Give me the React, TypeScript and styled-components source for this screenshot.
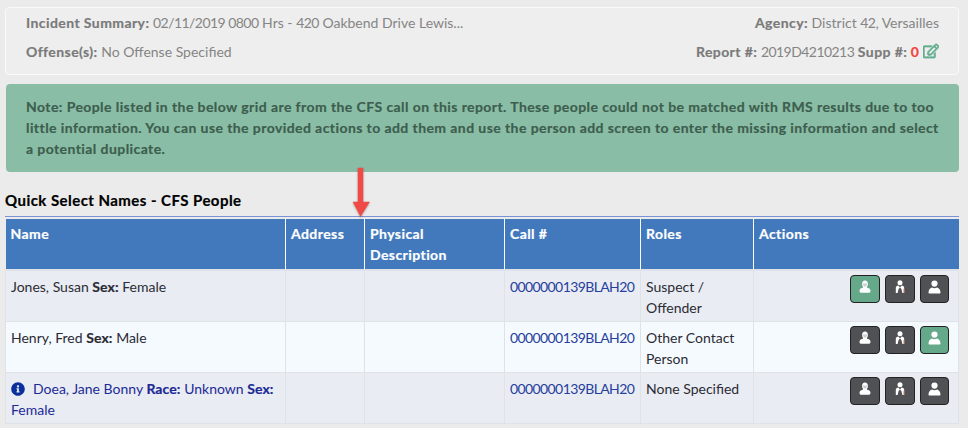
import React from 'react';
import styled, { createGlobalStyle } from 'styled-components';
import { FaInfoCircle, FaRegEdit } from 'react-icons/fa';

const GlobalStyle = createGlobalStyle`
  html, body {
    margin: 0;
    height: 100%;
    overflow: hidden;
    background: #ebebeb;
  }
  body {
    font-family: Lato, "Noto Sans", sans-serif;
    font-size: 14px;
    line-height: 21px;
    color: #333;
  }
  b {
    font-weight: 700;
    letter-spacing: 0.42px;
    -webkit-text-stroke: 0.2px currentColor;
  }
`;

const PEOPLE = [
  { name: 'Jones, Susan', sex: 'Female', roles: 'Suspect / Offender', active: 0 },
  { name: 'Henry, Fred', sex: 'Male', roles: 'Other Contact Person', active: 2 },
  { name: 'Doea, Jane Bonny', race: 'Unknown', sex: 'Female', roles: 'None Specified', active: -1, flagged: true },
];

const MaskIcon = () => (
  <svg width="12" height="14" viewBox="0 0 12 14">
    <path d="M6 .5c1.900 0 2.900 1.500 2.900 3.500 0 1.300-.3 2.300-.9 3v.8c1.500.3 3.500 1 3.500 2.900 0 1.200-.6 2.100-2 2.100H2.500c-1.400 0-2-.9-2-2.100 0-1.900 2-2.600 3.500-2.900V7c-.6-.7-.9-1.700-.9-3 0-2 1-3.500 2.900-3.500z" fill="#fff" />
    <path d="M4 4.200h4M4.500 5.800h3" stroke="#9a9c9e" strokeWidth="0.7" />
  </svg>
);

const SuitIcon = () => (
  <svg width="10" height="14" viewBox="0 0 10 14">
    <circle cx="5" cy="2.800" r="2.500" fill="#fff" />
    <path d="M.8 13V8c0-1.500 1-2.300 2.600-2.500L5 7.500l1.600-2C8.200 5.700 9.200 6.500 9.200 8v5H7.400L6.400 9 5 7.500 3.600 9 2.600 13z" fill="#fff" />
    <path d="M9.200 8.500V13H8.500V9z" fill="#d9735f" />
  </svg>
);

const UserIcon = () => (
  <svg width="13" height="14" viewBox="0 0 13 14">
    <circle cx="6.500" cy="3.600" r="3.100" fill="#fff" />
    <path d="M.5 12.400c0-2.900 2-4.700 3.500-4.900.7.400 1.500.7 2.500.7s1.800-.3 2.500-.7c1.500.2 3.500 2 3.500 4.900 0 .6-.4 1.100-1 1.100H1.500c-.6 0-1-.5-1-1.100z" fill="#fff" />
  </svg>
);

const ICONS = [MaskIcon, SuitIcon, UserIcon];

const App = () => (
  <Page>
    <GlobalStyle />
    <SummaryPanel>
      <SummaryRow>
        <span>
          <b>Incident Summary:</b> <Digits>02/11/2019 0800</Digits> Hrs - <Digits>420</Digits> Oakbend Drive Lewis...
        </span>
        <span>
          <b>Agency:</b> District <Digits>42</Digits>, Versailles
        </span>
      </SummaryRow>
      <SummaryRow>
        <span>
          <b>Offense(s):</b> No Offense Specified
        </span>
        <span>
          <b>Report #:</b> <Digits>2019D4210213</Digits> <b>Supp #:</b> <SuppCount>0</SuppCount> <EditIcon />
        </span>
      </SummaryRow>
    </SummaryPanel>

    <NoteBox>
      Note: People listed in the below grid are from the CFS call on this report. These people could not be
      matched with RMS results due to too little information. You can use the provided actions to add them and use
      the person add screen to enter the missing information and select a potential duplicate.
    </NoteBox>

    <SectionTitle>Quick Select Names - CFS People</SectionTitle>

    <Grid>
      <colgroup>
        <col width="280" />
        <col width="79" />
        <col width="140" />
        <col width="136" />
        <col width="113" />
        <col />
      </colgroup>
      <thead>
        <tr>
          <HeadCell>Name</HeadCell>
          <HeadCell>Address</HeadCell>
          <HeadCell>Physical Description</HeadCell>
          <HeadCell>Call #</HeadCell>
          <HeadCell>Roles</HeadCell>
          <HeadCell>Actions</HeadCell>
        </tr>
      </thead>
      <tbody>
        {PEOPLE.map((person) => (
          <Row key={person.name}>
            <Cell>
              <NameText $flagged={person.flagged}>
                {person.flagged && <InfoIcon />}
                {person.name}
                {person.race && (
                  <>
                    {' '}
                    <b>Race:</b> {person.race}
                  </>
                )}{' '}
                <b>Sex:</b> {person.sex}
              </NameText>
            </Cell>
            <Cell />
            <Cell />
            <Cell>
              <CallLink>0000000139BLAH20</CallLink>
            </Cell>
            <Cell>{person.roles}</Cell>
            <Cell>
              <Actions>
                {ICONS.map((Icon, idx) => (
                  <ActionButton key={idx} $active={person.active === idx}>
                    <Icon />
                  </ActionButton>
                ))}
              </Actions>
            </Cell>
          </Row>
        ))}
      </tbody>
    </Grid>

    <CalloutArrow width="20" height="52" viewBox="0 0 20 52">
      <path d="M8 2h5v34h6.500L10.500 50.500 3 36h5z" fill="#ef4a45" stroke="#ef4a45" strokeWidth="0.5" strokeLinejoin="round" />
    </CalloutArrow>
  </Page>
);

export default App;

const Page = styled.div`
  position: relative;
  height: 428px;
  padding: 7px 9px 0 5px;
  box-sizing: border-box;
`;

const SummaryPanel = styled.div`
  height: 68px;
  box-sizing: border-box;
  padding: 0 19px 0 20px;
  background: #eeeeee;
  border: 1px solid #fafafa;
  border-radius: 4px;
  color: #858585;
  b {
    color: #7a7a7a;
  }
`;

const SummaryRow = styled.div`
  display: flex;
  justify-content: space-between;
  height: 29px;
  align-items: center;
`;

const Digits = styled.span`
  letter-spacing: -0.55px;
`;

const SuppCount = styled.b`
  && {
    color: #f4433c;
  }
`;

const EditIcon = styled(FaRegEdit)`
  color: #62ae8e;
  font-size: 16px;
  vertical-align: -2px;
  stroke: currentColor;
  stroke-width: 24px;
`;

const NoteBox = styled.div`
  height: 88px;
  box-sizing: border-box;
  margin: 9px 0 0 1px;
  padding: 12px 20px 0;
  background: #8abda5;
  border-radius: 4px;
  color: #3d5e4f;
  font-weight: 700;
  letter-spacing: 0.42px;
  -webkit-text-stroke: 0.2px currentColor;
`;

const SectionTitle = styled.h4`
  margin: 0;
  padding: 18px 0 5px;
  height: 45px;
  box-sizing: border-box;
  border-bottom: 1px solid #7b93d6;
  font-size: 15px;
  font-weight: 700;
  letter-spacing: 0.45px;
  line-height: 21px;
  color: #000;
  -webkit-text-stroke: 0.2px currentColor;
`;

const Grid = styled.table`
  width: 954px;
  margin: 2px 0 0 0;
  border-collapse: collapse;
  table-layout: fixed;
`;

const HeadCell = styled.th`
  height: 50px;
  box-sizing: border-box;
  padding: 4px 5px;
  background: #4279bd;
  border-left: 1px solid #fff;
  border-bottom: 2px solid #dfe2e8;
  color: #fff;
  font-weight: 700;
  letter-spacing: 0.42px;
  -webkit-text-stroke: 0.2px currentColor;
  text-align: left;
  vertical-align: top;
  &:first-child {
    border-left: 0;
  }
`;

const Row = styled.tr`
  background: #e9ecf3;
  color: #2b2b33;
  &:nth-child(even) {
    background: #f5faff;
  }
  b {
    letter-spacing: 0.1px;
  }
`;

const Cell = styled.td`
  height: 51px;
  box-sizing: border-box;
  padding: 5px 5px 3px;
  border: 1px solid #dfe2e6;
  vertical-align: top;
`;

const NameText = styled.span<{ $flagged?: boolean }>`
  color: ${({ $flagged }) => ($flagged ? '#1c2a96' : 'inherit')};
`;

const InfoIcon = styled(FaInfoCircle)`
  color: #0b2f9c;
  font-size: 14px;
  margin-right: 8px;
  vertical-align: -2px;
`;

const CallLink = styled.a`
  color: #263f9c;
  letter-spacing: -0.6px;
  white-space: nowrap;
`;

const Actions = styled.div`
  display: flex;
  justify-content: flex-end;
  gap: 5px;
  margin-top: -1px;
  padding-right: 4px;
`;

const ActionButton = styled.button<{ $active: boolean }>`
  display: flex;
  align-items: center;
  justify-content: center;
  width: 30px;
  height: 28px;
  padding: 0 0 4px;
  border: 1px solid #222;
  border-radius: 4px;
  background: ${({ $active }) => ($active ? '#65a98a' : '#505154')};
  &:last-child {
    width: 29px;
  }
`;

const CalloutArrow = styled.svg`
  position: absolute;
  left: 350px;
  top: 166px;
  filter: drop-shadow(0 1px 1px rgba(0, 0, 0, 0.25));
`;
